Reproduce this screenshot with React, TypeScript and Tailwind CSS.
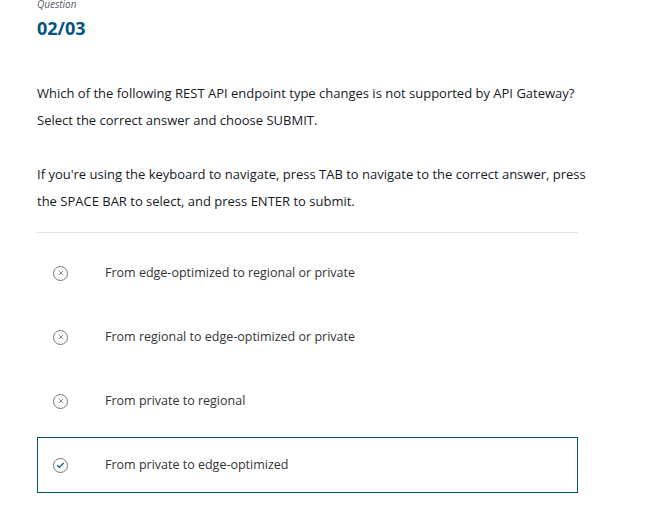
import { X, Check } from 'lucide-react';

const options = [
  { id: 'a', text: 'From edge-optimized to regional or private', correct: false },
  { id: 'b', text: 'From regional to edge-optimized or private', correct: false },
  { id: 'c', text: 'From private to regional', correct: false },
  { id: 'd', text: 'From private to edge-optimized', correct: true },
];

export default function App() {
  return (
    <div
      className="w-[645px] h-[514px] bg-white text-[#16191f] overflow-hidden"
      style={{ fontFamily: '"Open Sans", "Liberation Sans", sans-serif' }}
    >
      <div className="pl-[37px] w-[578px]">
        <div className="h-[20px] -mt-[8px] flex items-end">
          <span className="text-[10px] italic text-[#545b64]">Question</span>
        </div>
        <h1 className="mt-[4px] text-[18px] leading-[24px] font-bold text-[#00557f]">02/03</h1>

        <div className="mt-[40px] w-[560px] text-[13px] leading-[27px]">
          <p>Which of the following REST API endpoint type changes is not supported by API Gateway?</p>
          <p>Select the correct answer and choose SUBMIT.</p>
          <p className="mt-[27px]">
            If you're using the keyboard to navigate, press TAB to navigate to the correct answer, press
            the SPACE BAR to select, and press ENTER to submit.
          </p>
        </div>

        <div className="mt-[17px] border-t border-[#e5e5e5]" />

        <div className="mt-[12px] flex flex-col gap-[8px]">
          {options.map((o) => (
            <OptionRow key={o.id} text={o.text} correct={o.correct} />
          ))}
        </div>
      </div>
    </div>
  );
}

function OptionRow({ text, correct }: { text: string; correct: boolean }) {
  return (
    <div
      className={`h-[56px] flex items-center pl-[15px] border ${
        correct ? 'border-[#005276]' : 'border-transparent'
      }`}
    >
      <span className="w-[15px] h-[15px] rounded-full border border-[#777] flex items-center justify-center">
        {correct ? (
          <Check size={9} strokeWidth={3} className="text-[#00557f]" />
        ) : (
          <X size={8} strokeWidth={1.75} className="text-[#333]" />
        )}
      </span>
      <span className="ml-[37px] text-[12.5px] text-[#333]">{text}</span>
    </div>
  );
}
